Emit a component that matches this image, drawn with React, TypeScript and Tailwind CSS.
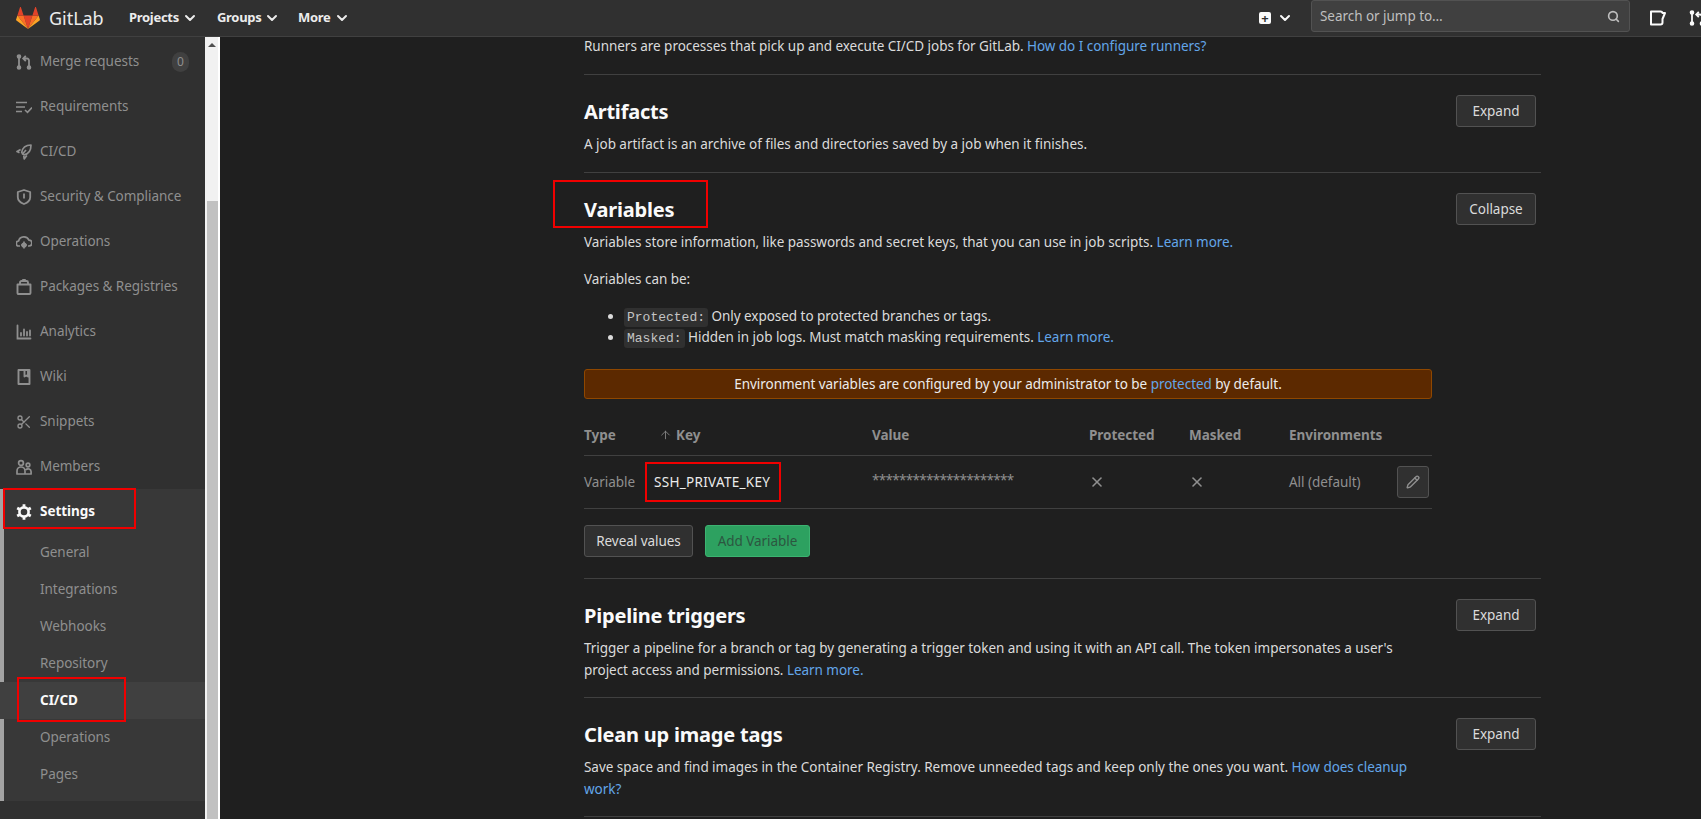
import React from 'react';
import { ChevronDown, Search, Scissors, Pencil, X, ArrowUp } from 'lucide-react';

const font = "font-['Noto_Sans',sans-serif]";

const IconMr = ({ className = 'w-4 h-4' }: { className?: string }) => (
  <svg viewBox="0 0 16 16" className={className} fill="none" stroke="currentColor" strokeWidth="1.8">
    <circle cx="3" cy="2.5" r="1.4" fill="currentColor" />
    <circle cx="3" cy="13.5" r="1.4" fill="currentColor" />
    <circle cx="13" cy="13.5" r="1.4" fill="currentColor" />
    <path d="M3 3v10M13 13V6.5a2 2 0 0 0-2-2H8M9.8 1.8 7.2 4.5l2.6 2.7" />
  </svg>
);

const IconReq = () => (
  <svg viewBox="0 0 16 16" className="w-4 h-4" fill="none" stroke="currentColor" strokeWidth="1.6">
    <path d="M0 3.5h11M0 8h9M0 12.5h6M9 11l2.5 2.3L16 8.6" />
  </svg>
);

const IconRocket = () => (
  <svg viewBox="0 0 16 16" className="w-4 h-4" fill="none" stroke="currentColor" strokeWidth="1.7" strokeLinejoin="round">
    <path d="M15 1C10 1 6.5 3.5 5.7 8.5l2.3 2.3C13 10 15 6 15 1Z" />
    <path d="M4.6 5.5 1 7.5l2.5 1.3M7.8 12l.4 3 2.6-3.5M6 10.5l4-4.5" />
  </svg>
);

const IconShield = () => (
  <svg viewBox="0 0 16 16" className="w-4 h-4" fill="none" stroke="currentColor" strokeWidth="1.8" strokeLinejoin="round">
    <path d="M1.8 3 8 1l6.2 2v5.2c0 3-3 5.5-6.2 6.8-3.2-1.3-6.2-3.8-6.2-6.8V3Z" />
    <path d="M8 4.5v5" />
  </svg>
);

const IconCloud = () => (
  <svg viewBox="0 0 16 16" className="w-4 h-4" fill="none" stroke="currentColor" strokeWidth="1.7" strokeLinejoin="round">
    <path d="M4 12H3a2.5 2.5 0 0 1-.4-5A5.5 5.5 0 0 1 13 6.2 2.9 2.9 0 0 1 13 12h-1" />
    <circle cx="8" cy="11" r="2.6" fill="currentColor" stroke="none" />
    <path d="M8 7.6v6.8M5 11h6" />
  </svg>
);

const IconPackage = () => (
  <svg viewBox="0 0 16 16" className="w-4 h-4" fill="none" stroke="currentColor" strokeWidth="1.9" strokeLinejoin="round">
    <path d="M1.5 5.5h13V14a1 1 0 0 1-1 1h-11a1 1 0 0 1-1-1V5.5ZM4 5.5V3.5a1.5 1.5 0 0 1 1.5-1.5h5A1.5 1.5 0 0 1 12 3.5v2" />
    <path d="M6.8 2V.5h2.4V2" strokeWidth="1.2" />
  </svg>
);

const IconChart = () => (
  <svg viewBox="0 0 16 16" className="w-4 h-4" fill="none" stroke="currentColor" strokeWidth="1.8" strokeLinecap="round">
    <path d="M1.5 1.5V14.5h13M5 9v2.5M8 5.5v6M11 8v3.5M14 6.5v5" />
  </svg>
);

const IconBook = () => (
  <svg viewBox="0 0 16 16" className="w-4 h-4" fill="none" stroke="currentColor" strokeWidth="1.9" strokeLinejoin="round">
    <path d="M2.5 1h11v14h-11ZM8.5 1v6.5l1.8-1 1.7 1V1" />
  </svg>
);

const IconUsers = () => (
  <svg viewBox="0 0 16 16" className="w-4 h-4" fill="none" stroke="currentColor" strokeWidth="1.7" strokeLinejoin="round">
    <circle cx="5" cy="4" r="2.4" />
    <circle cx="12" cy="6" r="1.8" />
    <path d="M1 15v-3a4 4 0 0 1 8 0v3ZM9.5 15h5.6v-2.2a3 3 0 0 0-5.2-2" />
  </svg>
);

const IconGear = () => (
  <svg viewBox="0 0 16 16" className="w-4 h-4" fill="none" stroke="currentColor">
    <circle cx="8" cy="8" r="4.6" strokeWidth="2.6" />
    <path strokeWidth="2.8" d="M8 .2v2.6M8 13.2v2.6M1.2 4l2.3 1.3M12.5 10.7l2.3 1.3M1.2 12l2.3-1.3M12.5 5.3 14.8 4" />
  </svg>
);

const IconIssue = () => (
  <svg viewBox="0 0 16 16" className="w-4 h-4" fill="none" stroke="currentColor" strokeWidth="2" strokeLinejoin="round">
    <path d="M1 1.5h9.5a2 2 0 0 1 2 1.5L15 3l-2.5 6v3.5a2 2 0 0 1-2 2H1Z" />
  </svg>
);

const Logo = () => (
  <svg viewBox="0 0 24 22" className="w-6 h-[22px] mb-[1px]">
    <path fill="#e24329" d="M12 22 16.4 8.4H7.6Z" />
    <path fill="#fc6d26" d="M12 22 7.6 8.4H1.4Z" />
    <path fill="#fca326" d="M1.4 8.4.1 12.5a.9.9 0 0 0 .3 1L12 22Z" />
    <path fill="#e24329" d="M1.4 8.4h6.2L4.9.3a.45.45 0 0 0-.9 0Z" />
    <path fill="#fc6d26" d="m12 22 4.4-13.6h6.2Z" />
    <path fill="#fca326" d="m22.6 8.4 1.3 4.1a.9.9 0 0 1-.3 1L12 22Z" />
    <path fill="#e24329" d="M22.6 8.4h-6.2L19.1.3a.45.45 0 0 1 .9 0Z" />
  </svg>
);

const navItems: { label: string; icon: React.ReactNode; badge?: string }[] = [
  { label: 'Merge requests', icon: <IconMr />, badge: '0' },
  { label: 'Requirements', icon: <IconReq /> },
  { label: 'CI/CD', icon: <IconRocket /> },
  { label: 'Security & Compliance', icon: <IconShield /> },
  { label: 'Operations', icon: <IconCloud /> },
  { label: 'Packages & Registries', icon: <IconPackage /> },
  { label: 'Analytics', icon: <IconChart /> },
  { label: 'Wiki', icon: <IconBook /> },
  { label: 'Snippets', icon: <Scissors className="w-4 h-4" strokeWidth={2} /> },
  { label: 'Members', icon: <IconUsers /> },
];

const subItems = ['General', 'Integrations', 'Webhooks', 'Repository', 'CI/CD', 'Operations', 'Pages'];

const Btn = ({ children }: { children: React.ReactNode }) => (
  <button className="h-8 w-20 rounded-[3px] border border-[#525252] bg-[#303030] text-[#dbdbdb] shrink-0">
    {children}
  </button>
);

const Link = ({ children }: { children: React.ReactNode }) => <a className="text-[#63a6e9]">{children}</a>;

const RedBox = ({ className }: { className: string }) => (
  <div className={`absolute border-2 border-[#f00000] pointer-events-none ${className}`} />
);

const Code = ({ children }: { children: React.ReactNode }) => (
  <code className="bg-[#303030] text-[#c4c4c4] rounded-[3px] px-[3px] py-[2px] font-['Liberation_Mono',monospace] text-[13px] tracking-normal leading-none">
    {children}
  </code>
);

const Navbar = () => (
  <header className="h-[37px] shrink-0 bg-[#303030] border-b border-[#404040] flex items-center text-[#fafafa]">
    <div className="ml-4 flex items-center w-[113px]">
      <Logo />
      <span className="ml-[9px] text-[18px] text-[#ececec]">GitLab</span>
    </div>
    <nav className="flex items-center text-[13px] font-bold tracking-[-0.3px] text-[#ececec]">
      <span className="w-[88px] flex items-center gap-[3px]">Projects <ChevronDown className="w-4 h-4" strokeWidth={3} /></span>
      <span className="w-[81px] flex items-center gap-[3px]">Groups <ChevronDown className="w-4 h-4" strokeWidth={3} /></span>
      <span className="flex items-center gap-[3px]">More <ChevronDown className="w-4 h-4" strokeWidth={3} /></span>
    </nav>
    <div className="ml-auto flex items-center">
      <div className="w-3 h-3 rounded-[2px] bg-[#fafafa] text-[#303030] flex items-center justify-center text-[13px] font-bold leading-none">+</div>
      <ChevronDown className="ml-[6px] w-4 h-4" strokeWidth={3} />
      <div className="ml-[18px] mb-1 w-[319px] h-8 rounded-[3px] bg-[#404040] border border-[#525252] flex items-center justify-between pl-2 pr-[9px] text-[#bfbfbf]">
        <span>Search or jump to…</span>
        <Search className="w-[13px] h-[13px] text-[#bfbfbf]" strokeWidth={3} />
      </div>
      <div className="ml-5 w-[39px]"><IconIssue /></div>
      <div className="w-3"><IconMr /></div>
    </div>
  </header>
);

const Sidebar = () => (
  <aside className="w-[205px] shrink-0 bg-[#303030] text-[#8f8f8f] pt-[2px] relative">
    {navItems.map((it) => (
      <div key={it.label} className="h-[45px] flex items-center pl-4 pr-4 gap-2">
        <span className="w-4 flex justify-center">{it.icon}</span>
        <span>{it.label}</span>
        {it.badge && (
          <span className="ml-auto w-[17px] h-5 rounded-full bg-[#404040] flex items-center justify-center text-[12px]">{it.badge}</span>
        )}
      </div>
    ))}
    <div className="bg-[#383838] border-l-4 border-[#a3a3a3] h-[312px]">
      <div className="h-[45px] flex items-center pl-3 gap-2 text-[#fafafa] font-bold">
        <IconGear />
        <span>Settings</span>
      </div>
      {subItems.map((s) => (
        <div key={s} className={`h-[37px] flex items-center pl-[40px] -ml-1 ${s === 'CI/CD' ? 'bg-[#404040] text-[#fafafa] font-bold' : ''}`}>
          {s}
        </div>
      ))}
    </div>
  </aside>
);

const Scrollbar = () => (
  <div className="w-[15px] shrink-0 bg-[#f1f1f1] border-r-2 border-white flex flex-col">
    <div className="h-[15px] flex justify-center items-center">
      <div className="w-0 h-0 border-x-[4px] border-x-transparent border-b-[4px] border-b-[#505050]" />
    </div>
    <div className="mt-[149px] flex-1 bg-[#c1c1c1] mx-[2px] mr-0" />
  </div>
);

const Title = ({ children }: { children: React.ReactNode }) => (
  <h4 className="text-[20px] leading-[30px] font-bold tracking-[-0.2px] text-[#fafafa]">{children}</h4>
);

const Section = ({ title, desc, className }: { title: string; desc: React.ReactNode; className: string }) => (
  <section className={`border-b border-[#404040] pt-[22px] flex items-start justify-between ${className}`}>
    <div className="w-[826px]">
      <Title>{title}</Title>
      <p className="mt-[6px] leading-[22px]">{desc}</p>
    </div>
    <div className="mr-[5px] -mt-[2px]"><Btn>Expand</Btn></div>
  </section>
);

const Th = ({ children }: { children: React.ReactNode }) => (
  <div className="font-bold text-[#8f8f8f] flex items-center">{children}</div>
);

const VariablesSection = () => (
  <section className="border-b border-[#404040] pt-[22px] h-[406px] relative">
    <div className="flex items-start justify-between">
      <Title>Variables</Title>
      <div className="mr-[5px] -mt-[17px] translate-y-[15px]"><Btn>Collapse</Btn></div>
    </div>
    <p className="mt-[6px] leading-[22px]">
      Variables store information, like passwords and secret keys, that you can use in job scripts. <Link>Learn more.</Link>
    </p>
    <p className="mt-[15px] leading-[22px]">Variables can be:</p>
    <ul className="mt-[16px] pl-[40px] list-disc leading-[21px]">
      <li className="h-[21px]"><Code>Protected:</Code> Only exposed to protected branches or tags.</li>
      <li className="h-[21px]"><Code>Masked:</Code> Hidden in job logs. Must match masking requirements. <Link>Learn more.</Link></li>
    </ul>
    <div className="mt-[21px] w-[848px] h-[30px] rounded-[3px] bg-[#5c2900] border border-[#8f4700] text-[#ececec] flex items-center justify-center">
      <span>Environment variables are configured by your administrator to be <Link>protected</Link> by default.</span>
    </div>
    <div className="mt-[21px] w-[848px]">
      <div className="grid grid-cols-[76px_212px_217px_100px_100px_108px_35px] h-[36px] pb-[5px] items-center border-b border-[#404040]">
        <Th>Type</Th>
        <Th><ArrowUp className="w-[13px] h-[14px] -ml-[1px] mr-[4px]" strokeWidth={1.5} />Key</Th>
        <Th>Value</Th>
        <Th>Protected</Th>
        <Th>Masked</Th>
        <Th>Environments</Th>
        <div />
      </div>
      <div className="grid grid-cols-[76px_212px_217px_100px_100px_108px_35px] h-[53px] items-center border-b border-[#404040] text-[#8f8f8f]">
        <div>Variable</div>
        <div className="text-[#ececec] -ml-[6px] tracking-[0.3px]">SSH_PRIVATE_KEY</div>
        <div className="pb-1 tracking-[-0.7px]">*********************</div>
        <X className="w-4 h-4" strokeWidth={2.4} />
        <X className="w-4 h-4" strokeWidth={2.4} />
        <div>All (default)</div>
        <div className="w-8 h-8 rounded-[3px] border border-[#525252] bg-[#303030] flex items-center justify-center">
          <Pencil className="w-[14px] h-[14px]" strokeWidth={2.4} />
        </div>
      </div>
    </div>
    <div className="mt-4 flex gap-3">
      <button className="h-8 w-[109px] rounded-[3px] border border-[#525252] bg-[#303030] text-[#dbdbdb]">Reveal values</button>
      <button className="h-8 w-[105px] rounded-[3px] border border-[#3cb371] bg-[#2da160] text-[#2c5640]">Add Variable</button>
    </div>
  </section>
);

export default function App() {
  return (
    <div className={`relative w-[1701px] h-[819px] overflow-hidden flex flex-col bg-[#1f1f1f] text-[13.5px] tracking-[-0.04px] ${font}`}>
      <Navbar />
      <div className="flex flex-1 min-h-0">
        <Sidebar />
        <Scrollbar />
        <main className="pl-[364px] w-[1321px] text-[#dbdbdb]">
          <div className="w-[957px]">
            <div className="h-[38px] border-b border-[#404040] leading-[18px]">
              Runners are processes that pick up and execute CI/CD jobs for GitLab. <Link>How do I configure runners?</Link>
            </div>
            <Section
              className="pb-[17px]"
              title="Artifacts"
              desc="A job artifact is an archive of files and directories saved by a job when it finishes."
            />
            <VariablesSection />
            <Section
              className="pb-[16px]"
              title="Pipeline triggers"
              desc={<>Trigger a pipeline for a branch or tag by generating a trigger token and using it with an API call. The token impersonates a user's project access and permissions. <Link>Learn more.</Link></>}
            />
            <Section
              className="pb-[16px]"
              title="Clean up image tags"
              desc={<>Save space and find images in the Container Registry. Remove unneeded tags and keep only the ones you want. <Link>How does cleanup work?</Link></>}
            />
          </div>
        </main>
      </div>
      {/* annotation boxes drawn over the screenshot */}
      <RedBox className="left-[553px] top-[180px] w-[155px] h-[48px]" />
      <RedBox className="left-[645px] top-[462px] w-[136px] h-[40px]" />
      <RedBox className="left-[3px] top-[488px] w-[133px] h-[41px]" />
      <RedBox className="left-[17px] top-[677px] w-[109px] h-[45px]" />
    </div>
  );
}
